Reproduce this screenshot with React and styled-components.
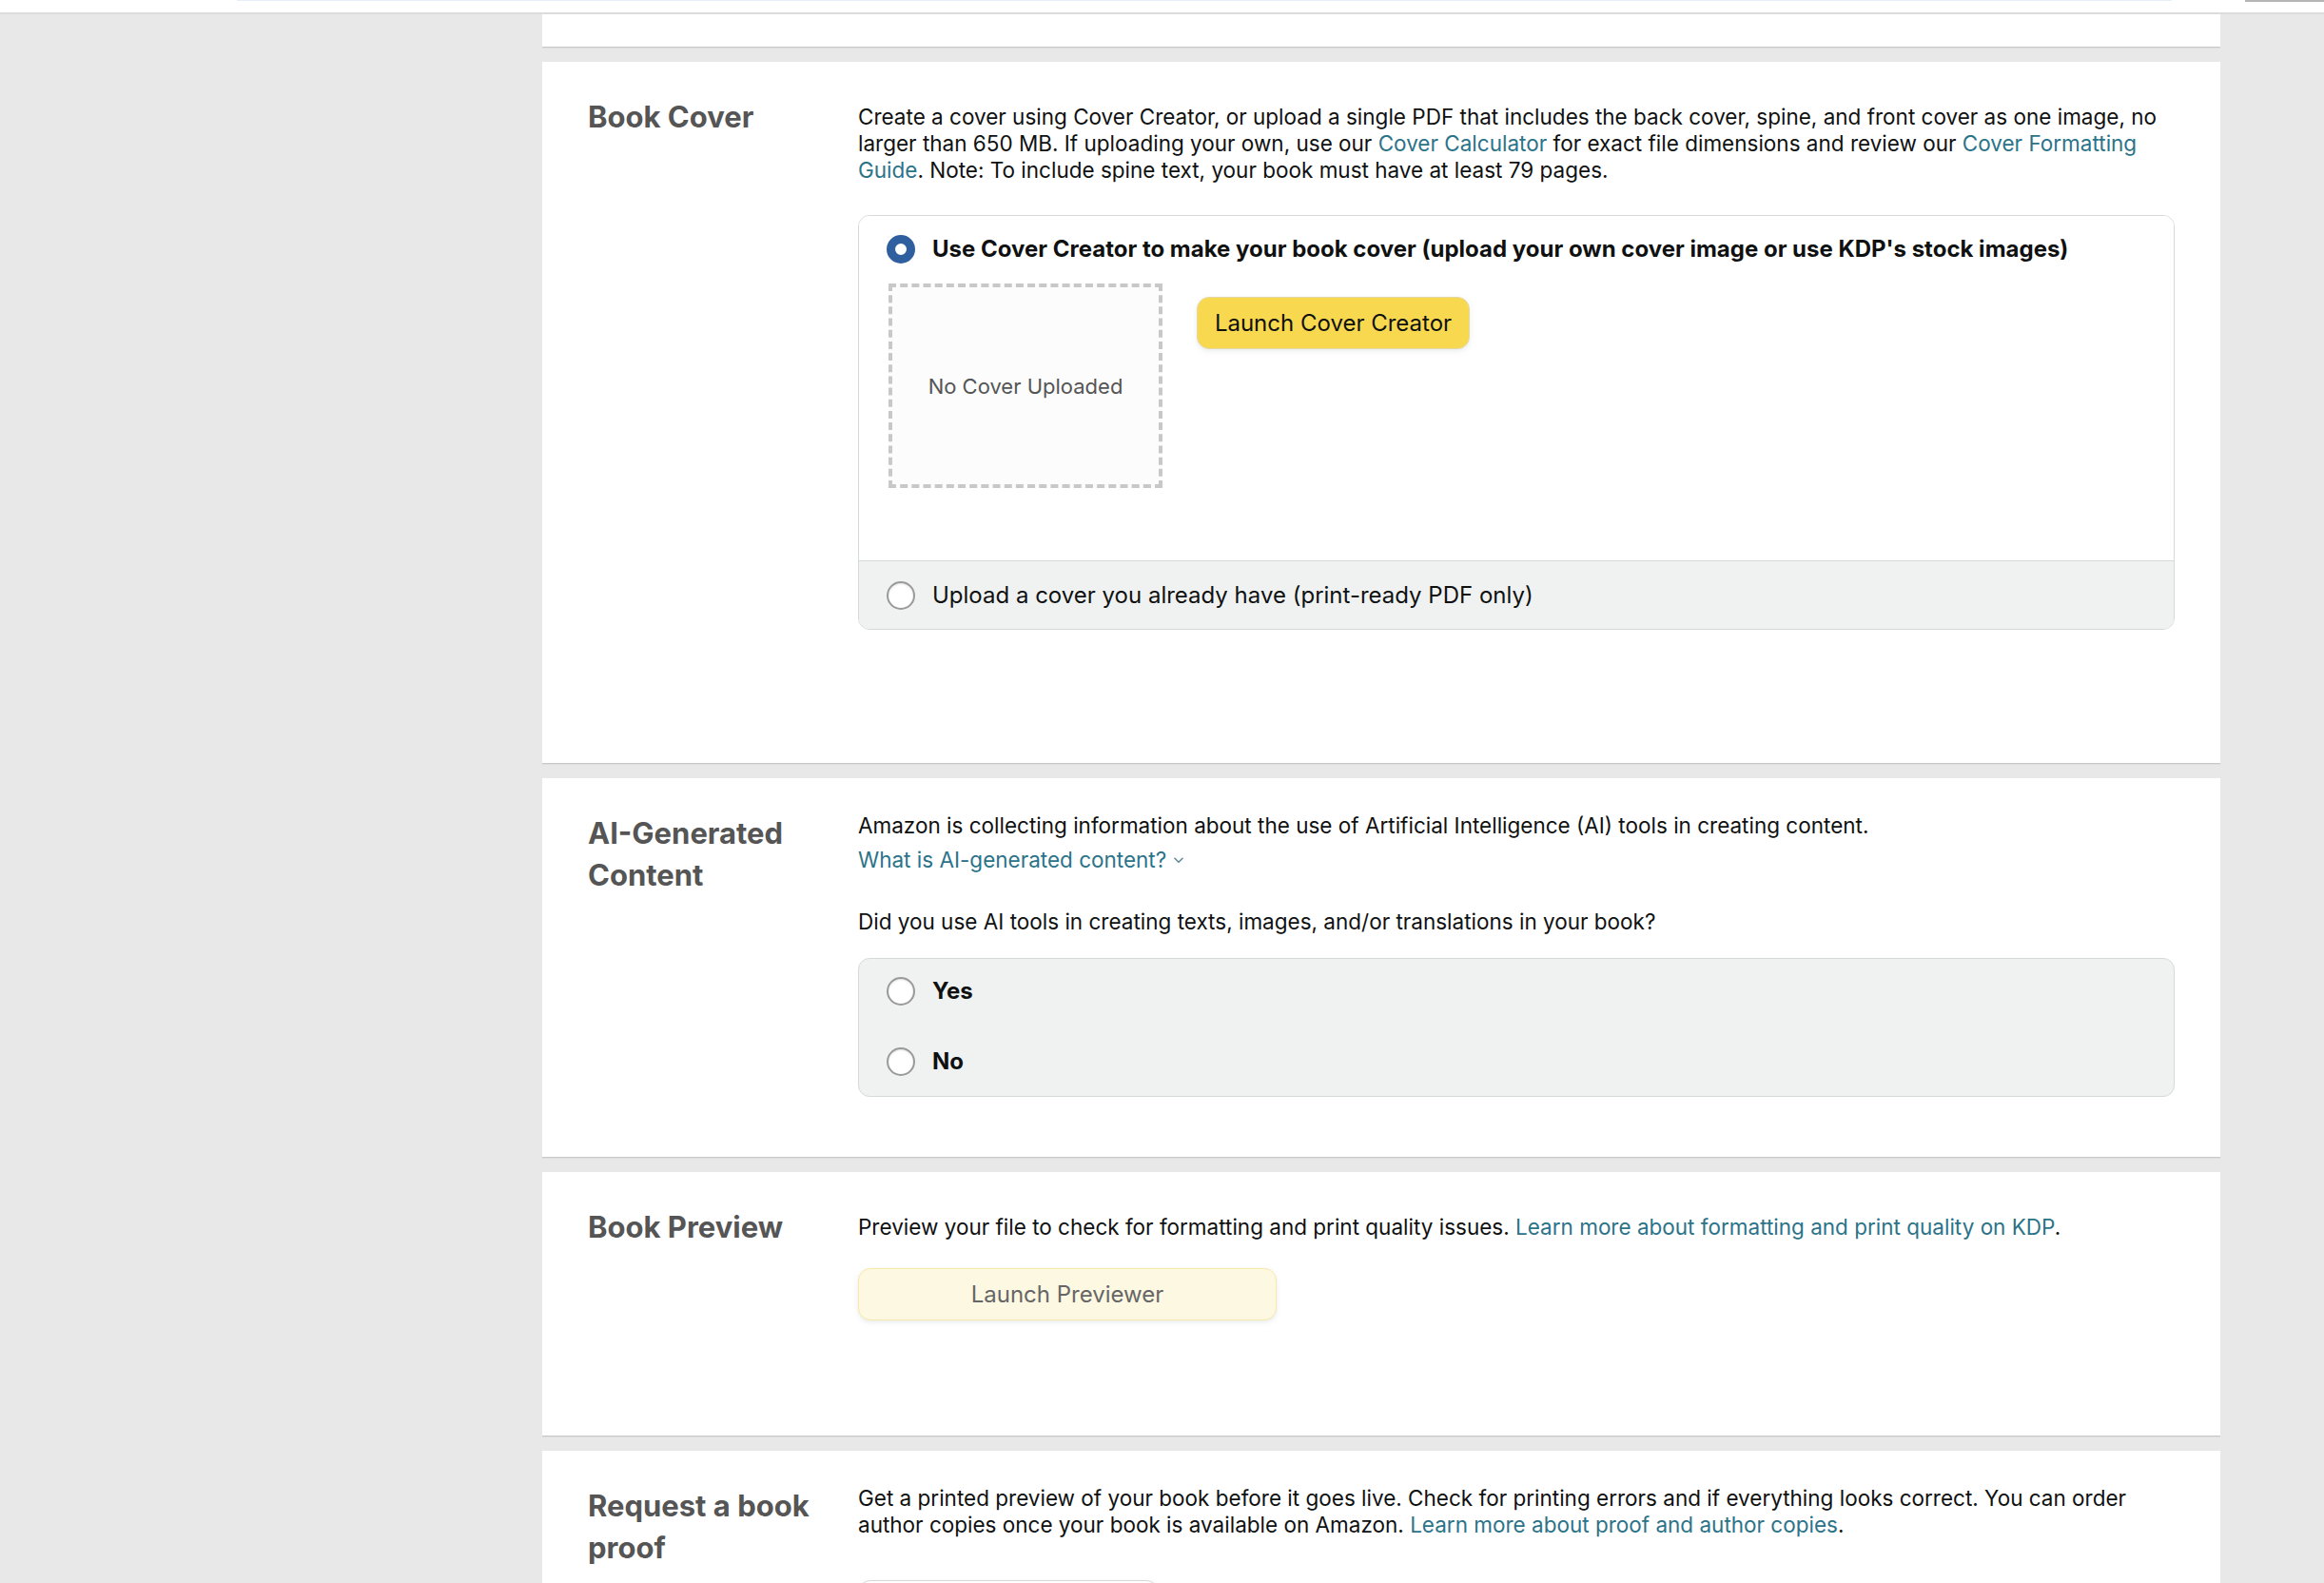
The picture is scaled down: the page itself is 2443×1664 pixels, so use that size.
import React from "react";
import styled, { createGlobalStyle } from "styled-components";

const GlobalStyle = createGlobalStyle`
  html, body {
    margin: 0;
    padding: 0;
    background: #e8e8e8;
    overflow: hidden;
  }
  * { box-sizing: border-box; }
`;

const Screen = styled.div`
  height: 1664px;
  overflow: hidden;
  background: #e8e8e8;
  font-family: Inter, "Open Sans", "Liberation Sans", sans-serif;
  color: #0f1111;
`;

const TopBar = styled.div`
  height: 15px;
  background: #fff;
  border-bottom: 2px solid #dcdcdc;
  display: flex;
  align-items: flex-start;
  padding-left: 249px;
`;

const TopStrip = styled.div`
  width: ${(p) => p.w}px;
  height: ${(p) => p.h}px;
  background: ${(p) => p.c};
  margin-right: ${(p) => p.mr || 0}px;
`;

const Page = styled.div`
  display: flex;
  padding-left: 570px;
`;

const Column = styled.div`
  width: 1764px;
  display: flex;
  flex-direction: column;
  gap: 15px;
`;

const Card = styled.section`
  background: #fff;
  border-bottom: 1px solid #c9c9c9;
  box-shadow: 0 1px 0 #dedede;
  display: grid;
  grid-template-columns: 284px 1fr;
  padding: 36px 48px ${(p) => p.pb}px;
`;

const StubCard = styled.div`
  height: 35px;
  background: #fff;
  border-bottom: 1px solid #c9c9c9;
  box-shadow: 0 1px 0 #dedede;
`;

const Heading = styled.h2`
  margin: 0;
  padding-right: 24px;
  font-size: 31px;
  line-height: 44px;
  font-weight: 700;
  color: #555;
`;

const Body = styled.div`
  padding-top: ${(p) => p.pt || 0}px;
  display: flex;
  flex-direction: column;
  align-items: flex-start;
`;

const Para = styled.p`
  margin: ${(p) => p.mt || 0}px 0 0;
  font-size: 22.5px;
  line-height: 28px;
  color: #0f1111;
`;

const Link = styled.a`
  color: #2b7389;
  text-decoration: none;
  cursor: pointer;
`;

const DisclosureLink = styled(Link)`
  display: inline-flex;
  align-items: center;
  gap: 6px;
`;

const OptionCard = styled.div`
  margin-top: ${(p) => p.mt}px;
  align-self: stretch;
  border: 1px solid #d5d9d9;
  border-radius: 12px;
  overflow: hidden;
  background: #fff;
`;

const OptionSection = styled.div`
  padding: ${(p) => (p.muted ? "0 29px" : "20px 29px 76px")};
  height: ${(p) => (p.muted ? "72px" : "auto")};
  display: flex;
  flex-direction: column;
  justify-content: center;
  background: ${(p) => (p.muted ? "#f0f2f2" : "#fff")};
  border-top: ${(p) => (p.muted ? "1px solid #d5d9d9" : "none")};
`;

const ChoiceGroup = styled.div`
  margin-top: 24px;
  align-self: stretch;
  background: #f0f2f2;
  border: 1px solid #d5d9d9;
  border-radius: 12px;
  padding: 19px 29px 21px;
  display: flex;
  flex-direction: column;
  gap: 44px;
`;

const OptionRow = styled.label`
  display: flex;
  align-items: center;
  gap: 18px;
  height: 30px;
  cursor: pointer;
`;

const Radio = styled.span`
  flex: none;
  width: 30px;
  height: 30px;
  border-radius: 50%;
  background: #fff;
  border: ${(p) => (p.checked ? "9px solid #2f5f9e" : "2px solid #9a9a9a")};
  box-shadow: ${(p) => (p.checked ? "none" : "inset 0 1px 2px rgba(0,0,0,0.12)")};
`;

const OptionLabel = styled.span`
  font-size: 24px;
  line-height: 28px;
  font-weight: ${(p) => (p.bold ? 700 : 400)};
  color: #0f1111;
`;

const MediaRow = styled.div`
  margin-top: 21px;
  padding-left: 2px;
  display: flex;
  align-items: flex-start;
  gap: 36px;
`;

const CoverPlaceholder = styled.div`
  width: 288px;
  height: 215px;
  border: 4px dashed #c8c8c8;
  background: #fcfcfc;
  display: flex;
  align-items: center;
  justify-content: center;
  font-size: 22px;
  color: #555;
`;

const Button = styled.button`
  margin-top: ${(p) => p.mt || 0}px;
  width: ${(p) => p.w}px;
  height: 55px;
  border-radius: 13px;
  font-family: inherit;
  font-size: 24px;
  display: flex;
  align-items: center;
  justify-content: center;
  cursor: pointer;
  background: ${(p) =>
    p.variant === "primary" ? "#f8d84e" : p.variant === "disabled" ? "#fdf8e1" : "#fff"};
  border: 1px solid
    ${(p) => (p.variant === "disabled" ? "#f8e9a8" : p.variant === "primary" ? "#e4d9a6" : "#d5d9d9")};
  color: ${(p) => (p.variant === "disabled" ? "#666" : "#0f1111")};
  box-shadow: 0 2px 5px rgba(213, 217, 217, 0.5);
`;

function Chevron() {
  return (
    <svg width="14" height="14" viewBox="0 0 12 12" fill="none" aria-hidden="true">
      <path d="M2.5 4.5 L6 8 L9.5 4.5" stroke="#5f8794" strokeWidth="1.3" strokeLinecap="round" strokeLinejoin="round" />
    </svg>
  );
}

export default function App() {
  return (
    <Screen>
      <GlobalStyle />
      <TopBar>
        <TopStrip w={2034} h={1} c="#e6eef8" mr={77} />
        <TopStrip w={83} h={2} c="#b5b5b5" />
      </TopBar>
      <Page>
        <Column>
          <StubCard />

          <Card pb={140}>
            <Heading>Book Cover</Heading>
            <Body pt={8}>
              <Para>
                Create a cover using Cover Creator, or upload a single PDF that includes the back cover, spine, and
                front cover as one image, no larger than 650 MB. If uploading your own, use our{" "}
                <Link>Cover Calculator</Link> for exact file dimensions and review our{" "}
                <Link>Cover Formatting Guide</Link>. Note: To include spine text, your book must have at least 79 pages.
              </Para>
              <OptionCard mt={33}>
                <OptionSection>
                  <OptionRow>
                    <Radio checked />
                    <OptionLabel bold>
                      Use Cover Creator to make your book cover (upload your own cover image or use KDP's stock images)
                    </OptionLabel>
                  </OptionRow>
                  <MediaRow>
                    <CoverPlaceholder>No Cover Uploaded</CoverPlaceholder>
                    <Button variant="primary" w={287} mt={14}>
                      Launch Cover Creator
                    </Button>
                  </MediaRow>
                </OptionSection>
                <OptionSection muted>
                  <OptionRow>
                    <Radio />
                    <OptionLabel>Upload a cover you already have (print-ready PDF only)</OptionLabel>
                  </OptionRow>
                </OptionSection>
              </OptionCard>
            </Body>
          </Card>

          <Card pb={63}>
            <Heading>AI-Generated Content</Heading>
            <Body>
              <Para>
                Amazon is collecting information about the use of Artificial Intelligence (AI) tools in creating content.
              </Para>
              <Para mt={8}>
                <DisclosureLink>
                  What is AI-generated content? <Chevron />
                </DisclosureLink>
              </Para>
              <Para mt={37}>Did you use AI tools in creating texts, images, and/or translations in your book?</Para>
              <ChoiceGroup>
                <OptionRow>
                  <Radio />
                  <OptionLabel bold>Yes</OptionLabel>
                </OptionRow>
                <OptionRow>
                  <Radio />
                  <OptionLabel bold>No</OptionLabel>
                </OptionRow>
              </ChoiceGroup>
            </Body>
          </Card>

          <Card pb={121}>
            <Heading>Book Preview</Heading>
            <Body pt={8}>
              <Para>
                Preview your file to check for formatting and print quality issues.{" "}
                <Link>Learn more about formatting and print quality on KDP</Link>.
              </Para>
              <Button variant="disabled" w={440} mt={29}>
                Launch Previewer
              </Button>
            </Body>
          </Card>

          <Card pb={40}>
            <Heading>Request a book proof</Heading>
            <Body>
              <Para>
                Get a printed preview of your book before it goes live. Check for printing errors and if everything looks
                correct. You can order author copies once your book is available on Amazon.{" "}
                <Link>Learn more about proof and author copies</Link>.
              </Para>
              <Button w={316} mt={44}>
                Request printed proofs
              </Button>
            </Body>
          </Card>
        </Column>
      </Page>
    </Screen>
  );
}
